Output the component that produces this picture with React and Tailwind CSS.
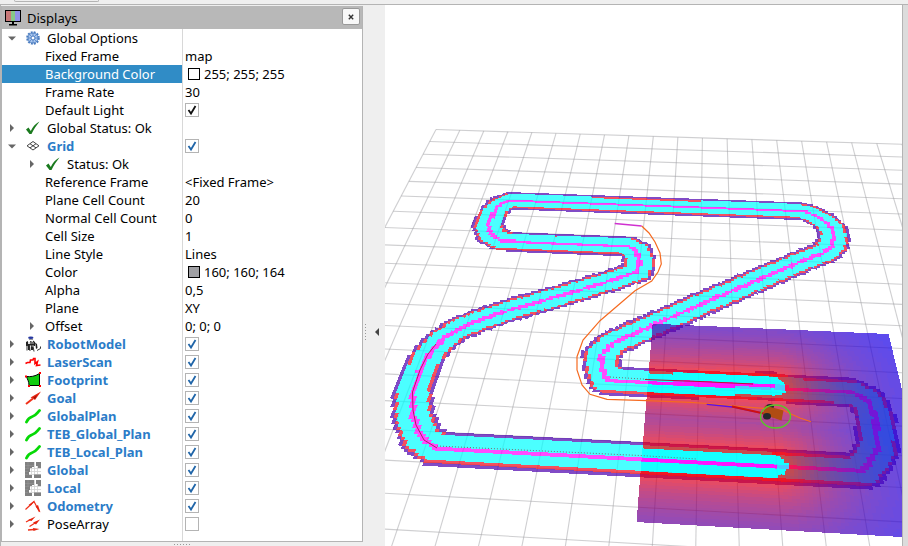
import React from "react";

/* ---------- perspective projection of the 20 x 20 ground plane ---------- */

const ANCHORS = [
  [0, 0, 436, 129.5],
  [19, 0, 902, 144.3],
  [4, 18, 409.1, 494.6],
  [15, 18, 865.3, 519.8],
];

function solve(m) {
  const n = m.length;
  for (let c = 0; c < n; c++) {
    let p = c;
    for (let r = c + 1; r < n; r++) if (Math.abs(m[r][c]) > Math.abs(m[p][c])) p = r;
    [m[c], m[p]] = [m[p], m[c]];
    for (let r = 0; r < n; r++) {
      if (r === c) continue;
      const f = m[r][c] / m[c][c];
      for (let k = c; k <= n; k++) m[r][k] -= f * m[c][k];
    }
  }
  return m.map((row, i) => row[n] / row[i]);
}

function homography(pairs) {
  const rows = [];
  for (const [u, v, x, y] of pairs) {
    rows.push([u, v, 1, 0, 0, 0, -u * x, -v * x, x]);
    rows.push([0, 0, 0, u, v, 1, -u * y, -v * y, y]);
  }
  const h = solve(rows);
  return (u, v) => {
    const w = h[6] * u + h[7] * v + 1;
    return [(h[0] * u + h[1] * v + h[2]) / w, (h[3] * u + h[4] * v + h[5]) / w];
  };
}

const project = homography(ANCHORS);
const unproject = homography(ANCHORS.map(([u, v, x, y]) => [x, y, u, v]));

/* ---------- scene data ---------- */

const WALL = [
  [510, 200.3], [650, 205.7], [800, 210.7], [810, 213.3], [822, 219.3], [831, 227.3], [834, 235],
  [832, 246], [823, 253.3], [807, 259], [773, 273.3], [733, 290.7], [703, 303.3], [673, 316.7],
  [640, 330.7], [613, 343], [601, 355], [602, 366.7], [607, 380], [650, 382], [773, 386.7],
  [807, 390], [853, 392.7], [867, 400], [875, 416.7], [878, 446.7], [870, 461.7], [862, 470.7],
  [787, 466.7], [640, 458.3], [437, 448.3], [422, 438.3], [413, 416.7], [412.7, 391.7], [420, 370],
  [430, 353.3], [444, 338], [460, 328.3], [480, 320], [513, 309], [563, 295], [613, 280],
  [637, 271.7], [640, 261.7], [636, 250.7], [627, 246], [553, 243.3], [502, 240.7], [492, 235],
  [488, 225], [494, 211.7], [501, 204], [510, 200.3],
].map(([x, y]) => unproject(x, y));

const SEEN = [
  [[640, 381.6], [773, 386.7]],
  [[625, 457.6], [773, 465.5]],
].map((s) => s.map(([x, y]) => unproject(x, y)));

function segDistance(px, py, [ax, ay], [bx, by]) {
  const dx = bx - ax;
  const dy = by - ay;
  const t = Math.max(0, Math.min(1, ((px - ax) * dx + (py - ay) * dy) / (dx * dx + dy * dy)));
  return Math.hypot(px - ax - t * dx, py - ay - t * dy);
}

function wallDistance(u, v) {
  let d = 99;
  for (let i = 1; i < WALL.length; i++) d = Math.min(d, segDistance(u, v, WALL[i - 1], WALL[i]));
  return d;
}

function seenDistance(u, v) {
  return Math.min(...SEEN.map(([a, b]) => segDistance(u, v, a, b)));
}

/* Neighbouring quads overlap by this much, so that no seam shows between them. */
const OVERLAP = 0.012;

/* Classifies every cell of a region and joins equal neighbours into quads, one path per colour. */
function rasterise(u0, v0, u1, v1, cell, classify) {
  const paths = {};
  const cols = Math.round((u1 - u0) / cell);
  const rows = Math.round((v1 - v0) / cell);
  for (let j = 0; j < rows; j++) {
    let start = 0;
    let current = null;
    for (let i = 0; i <= cols; i++) {
      const c = i < cols ? classify(u0 + (i + 0.5) * cell, v0 + (j + 0.5) * cell) : null;
      if (c === current) continue;
      if (current) {
        const a = u0 + start * cell - OVERLAP;
        const b = u0 + i * cell + OVERLAP;
        const t = v0 + j * cell - OVERLAP;
        const e = v0 + (j + 1) * cell + OVERLAP;
        const quad = [project(a, t), project(b, t), project(b, e), project(a, e)];
        paths[current] =
          (paths[current] || "") + "M" + quad.map((p) => p[0].toFixed(2) + " " + p[1].toFixed(2)).join("L") + "Z";
      }
      current = c;
      start = i;
    }
  }
  return Object.entries(paths);
}

const GLOBAL_MAP = rasterise(0, 0, 20, 20, 0.1, (u, v) => {
  const d = wallDistance(u, v);
  if (d < 0.065) return "#ff00ff";
  if (d < 0.39) return "#00ffff";
  if (d < 0.46) return "#f0081c";
  if (d < 0.54) return "#4c00ae";
  return null;
});

const [LU0, LV0] = unproject(653, 324);
const LV1 = unproject(637, 521)[1];
const LU1 = unproject(888, 334)[0];

const LOCAL_AREA = [project(LU0, LV0), project(LU1, LV0), project(LU1, LV1), project(LU0, LV1)]
  .map((p) => p.join(","))
  .join(" ");

const LOCAL_MAP = rasterise(LU0, LV0, LU1, LV1, 0.1, (u, v) => {
  const d = seenDistance(u, v);
  if (d < 0.06) return "#ff00ff";
  if (d < 0.36) return "#00ffff";
  const t = Math.round(Math.exp(-0.62 * (d - 0.36)) * 40) / 40;
  return "rgb(" + Math.round(255 * t) + ",0," + Math.round(255 * (1 - t)) + ")";
});

const GRID_LINES = Array.from({ length: 21 }, (_, k) => [
  [project(k, 0), project(k, 20)],
  [project(0, k), project(20, k)],
]).flat();

function Scene() {
  return (
    <svg
      className="block h-full w-full bg-white"
      viewBox="385 5 517 541"
      preserveAspectRatio="xMinYMin slice"
      role="img"
      aria-label="3D view"
    >
      <g stroke="#a0a0a4" strokeOpacity="0.5" strokeWidth="1.1">
        {GRID_LINES.map(([a, b], i) => (
          <line key={i} x1={a[0]} y1={a[1]} x2={b[0]} y2={b[1]} />
        ))}
      </g>
      <g opacity="0.7" shapeRendering="crispEdges">
        {GLOBAL_MAP.map(([color, d]) => (
          <path key={color} fill={color} d={d} />
        ))}
      </g>
      <g opacity="0.7" shapeRendering="crispEdges">
        <polygon points={LOCAL_AREA} fill="#700090" />
        {LOCAL_MAP.map(([color, d]) => (
          <path key={color} fill={color} d={d} />
        ))}
      </g>
      <g fill="none">
        <path d="M437 448L424 440L416 425L413 410L412.500 392L420 370L428 354L436 344" stroke="#b0205c" strokeWidth="1" />
        <path d="M437 446L640 455.500L697 459" stroke="#7a6a70" strokeWidth="1" strokeDasharray="1 2" />
        <path d="M610 377L650 379.500" stroke="#7a6a70" strokeWidth="1" strokeDasharray="1 2" />
        <path d="M645 379.500L700 381.500L753 384" stroke="#b01830" strokeWidth="1" />
        <path d="M614.700 223.500L641.700 226" stroke="#d030d0" strokeWidth="1.300" />
        <path
          d="M641.700 226L649 233L655 242L660 253L661.300 264L658 272L651.700 281L635 290.700L600 320.700L583 340L577 356.700L577 370L582 385L590 394.300L607 399.300L647 400.700L690 402.300L707 403.500L750 407.300L783 410L791 414L800 418L811 421.700"
          stroke="#f56a20"
          strokeWidth="1.200"
        />
        <path d="M706.700 404.300L733 407L764 413.500" stroke="#5a10e8" strokeWidth="1.300" />
        <path d="M732 406.500L764 413.500" stroke="#d01010" strokeWidth="2" />
      </g>
      <ellipse cx="770" cy="406.500" rx="4" ry="2.500" fill="#25282c" />
      <path d="M765 405.500L783.500 410.500L781.500 420.500L763 414.500Z" fill="#b04c12" />
      <ellipse cx="767" cy="416.300" rx="4" ry="3.200" fill="#25282c" />
      <ellipse cx="775.500" cy="416.500" rx="15" ry="11.500" fill="none" stroke="#58c828" strokeWidth="1.300" />
    </svg>
  );
}

/* ---------- icons ---------- */

function Svg({ children }) {
  return (
    <svg viewBox="0 0 16 16" className="block h-4 w-4 shrink-0" aria-hidden="true">
      {children}
    </svg>
  );
}

const CostmapIcon = (
  <Svg>
    <rect width="16" height="16" fill="#fff" />
    <path d="M3.500 0V16M6.500 0V16M9.500 0V16M12.500 0V16M0 6.500H16M0 9.500H16M0 12.500H16" stroke="#d0d0d0" strokeWidth=".8" />
    <path d="M0 0H9V5H7V6H5V10H4V13H7V16H0ZM11 0H16V6H13V4H11ZM9 12.500H16V16H9Z" fill="#808080" />
    <path d="M0 3.500H9M0 6.500H4M0 9.500H3M0 12.500H3M3 0V6" stroke="#989898" strokeWidth=".5" />
  </Svg>
);

const PathIcon = (
  <Svg>
    <path d="M1.500 14C3 10.500 4 9.500 7.500 8.500S12 5 14.500 2.500" fill="none" stroke="#06d906" strokeWidth="2.800" strokeLinecap="round" />
  </Svg>
);

const ICONS = {
  gear: (
    <Svg>
      <circle cx="8" cy="8" r="5.800" fill="none" stroke="#4a7cc0" strokeWidth="2" strokeDasharray="1.900 1.140" />
      <circle cx="8" cy="8" r="5" fill="#a9c6ee" stroke="#4a7cc0" strokeWidth=".9" />
      <circle cx="8" cy="8" r="2" fill="#fff" stroke="#4a7cc0" />
      <path d="M8 3V6M8 10V13M3 8H6M10 8H13M4.500 4.500L6.600 6.600M9.400 9.400L11.500 11.500M11.500 4.500L9.400 6.600M6.600 9.400L4.500 11.500" stroke="#4a7cc0" strokeWidth=".7" />
    </Svg>
  ),
  ok: (
    <Svg>
      <path d="M1 9.500L3.500 7.500L5.800 11C8 6.500 10 4 14.500 1.500C11 6 9 9 6.500 14H4.500Z" fill="#1a7a1e" />
    </Svg>
  ),
  grid: (
    <Svg>
      <path d="M8 3.500L14 7.800L8 12L2 7.800ZM5 5.700L11 9.900M11 5.700L5 9.900" fill="none" stroke="#444" />
    </Svg>
  ),
  robot: (
    <Svg>
      <ellipse cx="5.800" cy="1.800" rx="2.700" ry="1.300" fill="#2638a0" />
      <path d="M4 3.500H8" stroke="#999" />
      <path d="M1 6L3 5V8H5V5L8 6V4.500L10 6V10H8V14H6V9L5 10V14H3V10H1ZM10 6.500L12 8L12.500 12L11 13L10.500 9Z" fill="#222" />
      <path d="M2 9V14.500M4.500 9L5 15M8 10L9 15.500M12 14.500L15.500 12.500V10.500" fill="none" stroke="#333" />
      <path d="M3 7H9M6.500 10H9" stroke="#bbb" />
    </Svg>
  ),
  laser: (
    <Svg>
      <path d="M0.500 9.500L2.500 8.500L5 8.500L5.500 6L8 6L8.500 4.500H10V9.500L12.500 7.500L11.500 11.500L15.500 11" fill="none" stroke="#f00" strokeWidth="1.600" />
    </Svg>
  ),
  footprint: (
    <Svg>
      <path d="M1.500 4.500C5 5 10 4.500 14.500 1.500L14.500 13.500L4 13.500C4 9 2.500 8 1.500 4.500Z" fill="#10cc10" stroke="#000" />
      <path d="M0 3.500H2V5.500H0ZM14 0H16V2H14ZM14 13H16V15H14ZM3 13H5V15H3Z" fill="#f00" />
    </Svg>
  ),
  goal: (
    <Svg>
      <path d="M1 14L8 8.500" stroke="#f03018" strokeWidth="2" />
      <path d="M5.500 7.500L16 1.500L10 10L8 8.500Z" fill="#e62410" />
      <path d="M8 8L12 5L10 9Z" fill="#a01008" />
    </Svg>
  ),
  path: PathIcon,
  costmap: CostmapIcon,
  odometry: (
    <Svg>
      <path d="M0.500 11.500L9 3.500L14.500 14" fill="none" stroke="#f03018" strokeWidth="1.200" />
      <path d="M3.500 7L9.500 2.500L6 7.500ZM10.500 8.500L13 7L15.500 14.500Z" fill="#e62410" />
    </Svg>
  ),
  poses: (
    <Svg>
      <path d="M1 6L5.500 3.500M4.500 10.500L10 7M3 14L9 13.500" stroke="#f03018" strokeWidth="1.300" />
      <path d="M3 4L10.500 0.500L6.500 5ZM8 6.500L15 3.500L11 8.500ZM8 12L14.500 13L8.500 15Z" fill="#e62410" />
    </Svg>
  ),
};

function Arrow({ open }) {
  return (
    <button type="button" aria-label={open ? "Collapse" : "Expand"} className="flex h-4 w-4 shrink-0 items-center justify-end pr-[3px]">
      <svg viewBox="0 0 8 8" className="h-2 w-2" aria-hidden="true">
        <path d={open ? "M0 2.500H8L4 6.500Z" : "M2 0L6 4L2 8Z"} fill="#666" />
      </svg>
    </button>
  );
}

/* ---------- property tree ---------- */

const ROWS = [
  { arrow: "open", icon: "gear", label: "Global Options" },
  { label: "Fixed Frame", value: "map" },
  { label: "Background Color", value: "255; 255; 255", swatch: "bg-white", selected: true },
  { label: "Frame Rate", value: "30" },
  { label: "Default Light", check: "dark" },
  { arrow: "closed", icon: "ok", label: "Global Status: Ok" },
  { arrow: "open", icon: "grid", label: "Grid", bold: true, check: "blue" },
  { nested: true, arrow: "closed", icon: "ok", label: "Status: Ok" },
  { label: "Reference Frame", value: "<Fixed Frame>" },
  { label: "Plane Cell Count", value: "20" },
  { label: "Normal Cell Count", value: "0" },
  { label: "Cell Size", value: "1" },
  { label: "Line Style", value: "Lines" },
  { label: "Color", value: "160; 160; 164", swatch: "bg-[#a0a0a4]" },
  { label: "Alpha", value: "0,5" },
  { label: "Plane", value: "XY" },
  { nested: true, arrow: "closed", label: "Offset", value: "0; 0; 0" },
  { arrow: "closed", icon: "robot", label: "RobotModel", bold: true, check: "blue" },
  { arrow: "closed", icon: "laser", label: "LaserScan", bold: true, check: "blue" },
  { arrow: "closed", icon: "footprint", label: "Footprint", bold: true, check: "blue" },
  { arrow: "closed", icon: "goal", label: "Goal", bold: true, check: "blue" },
  { arrow: "closed", icon: "path", label: "GlobalPlan", bold: true, check: "blue" },
  { arrow: "closed", icon: "path", label: "TEB_Global_Plan", bold: true, check: "blue" },
  { arrow: "closed", icon: "path", label: "TEB_Local_Plan", bold: true, check: "blue" },
  { arrow: "closed", icon: "costmap", label: "Global", bold: true, check: "blue" },
  { arrow: "closed", icon: "costmap", label: "Local", bold: true, check: "blue" },
  { arrow: "closed", icon: "odometry", label: "Odometry", bold: true, check: "blue" },
  { arrow: "closed", icon: "poses", label: "PoseArray", check: "empty" },
];

function CheckBox({ id, kind }) {
  return (
    <span className="grid h-3.5 w-3.5 place-items-center">
      <input
        id={id}
        type="checkbox"
        defaultChecked={kind !== "empty"}
        className="peer col-start-1 row-start-1 h-3.5 w-3.5 appearance-none border border-[#b4b4b4] bg-white"
      />
      <svg
        viewBox="0 0 14 14"
        className="pointer-events-none invisible col-start-1 row-start-1 h-3.5 w-3.5 peer-checked:visible"
        aria-hidden="true"
      >
        <path d="M3.500 7L6 10.500L10.500 3" fill="none" stroke={kind === "dark" ? "#111" : "#2065a8"} strokeWidth="1.800" />
      </svg>
    </span>
  );
}

function Row({ row, index }) {
  const id = "property-" + index;
  const indent = row.nested ? "pl-[21px]" : row.arrow ? "pl-px" : "pl-[43px]";
  const text = row.selected ? "text-white" : row.bold ? "font-bold text-[#2b7cc8]" : "text-black";
  return (
    <div className="flex h-[18px] items-center">
      <div className={"flex h-full w-[180px] shrink-0 items-center gap-1.5 " + indent + (row.selected ? " bg-[#308cc6]" : "")}>
        {row.arrow && <Arrow open={row.arrow === "open"} />}
        {row.icon && ICONS[row.icon]}
        <label htmlFor={row.check ? id : undefined} className={"whitespace-nowrap " + text}>
          {row.label}
        </label>
      </div>
      <div className="flex h-full min-w-0 flex-1 items-center gap-1 border-l border-[#d8d8d8] pl-0.5">
        {row.swatch && <span className={"ml-[3px] h-3 w-3 border border-black " + row.swatch} />}
        {row.value && <span className="whitespace-nowrap">{row.value}</span>}
        {row.check && <CheckBox id={id} kind={row.check} />}
      </div>
    </div>
  );
}

function DisplaysPanel() {
  return (
    <section className="flex min-h-0 flex-1 flex-col border-x border-b border-[#b4b4b4] bg-white">
      <header className="flex h-[23px] shrink-0 items-center gap-1.5 bg-[#b8b8b8] pr-0.5 pl-[3px]">
        <svg viewBox="0 0 16 16" className="h-4 w-4" aria-hidden="true">
          <rect x=".5" y=".5" width="15" height="11" fill="#fff" stroke="#000" />
          <path d="M1 1H6V11H1Z" fill="#c87878" />
          <path d="M6 1H10V11H6Z" fill="#88c888" />
          <path d="M10 1H15V11H10Z" fill="#9090e8" />
          <path d="M7 12H9V14H12V15.500H4V14H7Z" fill="#000" />
        </svg>
        <h1 className="flex-1">Displays</h1>
        <button
          type="button"
          aria-label="Close"
          className="mb-0.5 flex h-[17px] w-[18px] items-center justify-center rounded-xs border border-[#999] bg-[#f8f8f8]"
        >
          <svg viewBox="0 0 6 6" className="h-1.5 w-1.5" aria-hidden="true">
            <path d="M.8 .8L5.200 5.200M5.200 .8L.8 5.200" stroke="#333" strokeWidth="1.400" />
          </svg>
        </button>
      </header>
      <div className="flex min-h-0 flex-1 flex-col overflow-hidden">
        {ROWS.map((row, i) => (
          <Row key={row.label} row={row} index={i} />
        ))}
        <div className="flex flex-1">
          <div className="w-[180px]" />
          <div className="flex-1 border-l border-[#d8d8d8]" />
        </div>
      </div>
    </section>
  );
}

export default function App() {
  return (
    <div className="flex h-screen w-full flex-col overflow-hidden bg-[#efefef] font-['Noto_Sans','Open_Sans',sans-serif] text-[13px] leading-[18px] text-black">
      <div className="flex h-[5px] shrink-0 border-b border-[#b4b4b4] pl-3.5">
        <div className="h-0.5 w-[85px] rounded-b-sm border-x border-b border-[#b4b4b4]" />
      </div>
      <div className="flex min-h-0 flex-1">
        <div className="flex w-[363px] shrink-0 flex-col border-l border-[#b4b4b4] pt-px">
          <DisplaysPanel />
          <div className="flex h-1 shrink-0 items-center justify-center gap-0.5">
            {[0, 1, 2, 3, 4, 5].map((i) => (
              <span key={i} className="h-px w-px bg-[#999]" />
            ))}
          </div>
        </div>
        <div className="flex w-[22px] shrink-0 items-center gap-2 pt-28 pl-0.5">
          <div className="flex flex-col gap-0.5">
            {[0, 1, 2, 3, 4, 5].map((i) => (
              <span key={i} className="h-px w-px bg-[#999]" />
            ))}
          </div>
          <button type="button" aria-label="Hide left panel" className="flex h-10 items-center">
            <svg viewBox="0 0 6 8" className="h-2 w-1.5" aria-hidden="true">
              <path d="M5 0V8L1 4Z" fill="#444" />
            </svg>
          </button>
        </div>
        <main className="min-w-0 flex-1 overflow-hidden">
          <Scene />
        </main>
        <div className="w-1.5 shrink-0 border-l border-[#b4b4b4] bg-[#dcdcdc]" />
      </div>
    </div>
  );
}
